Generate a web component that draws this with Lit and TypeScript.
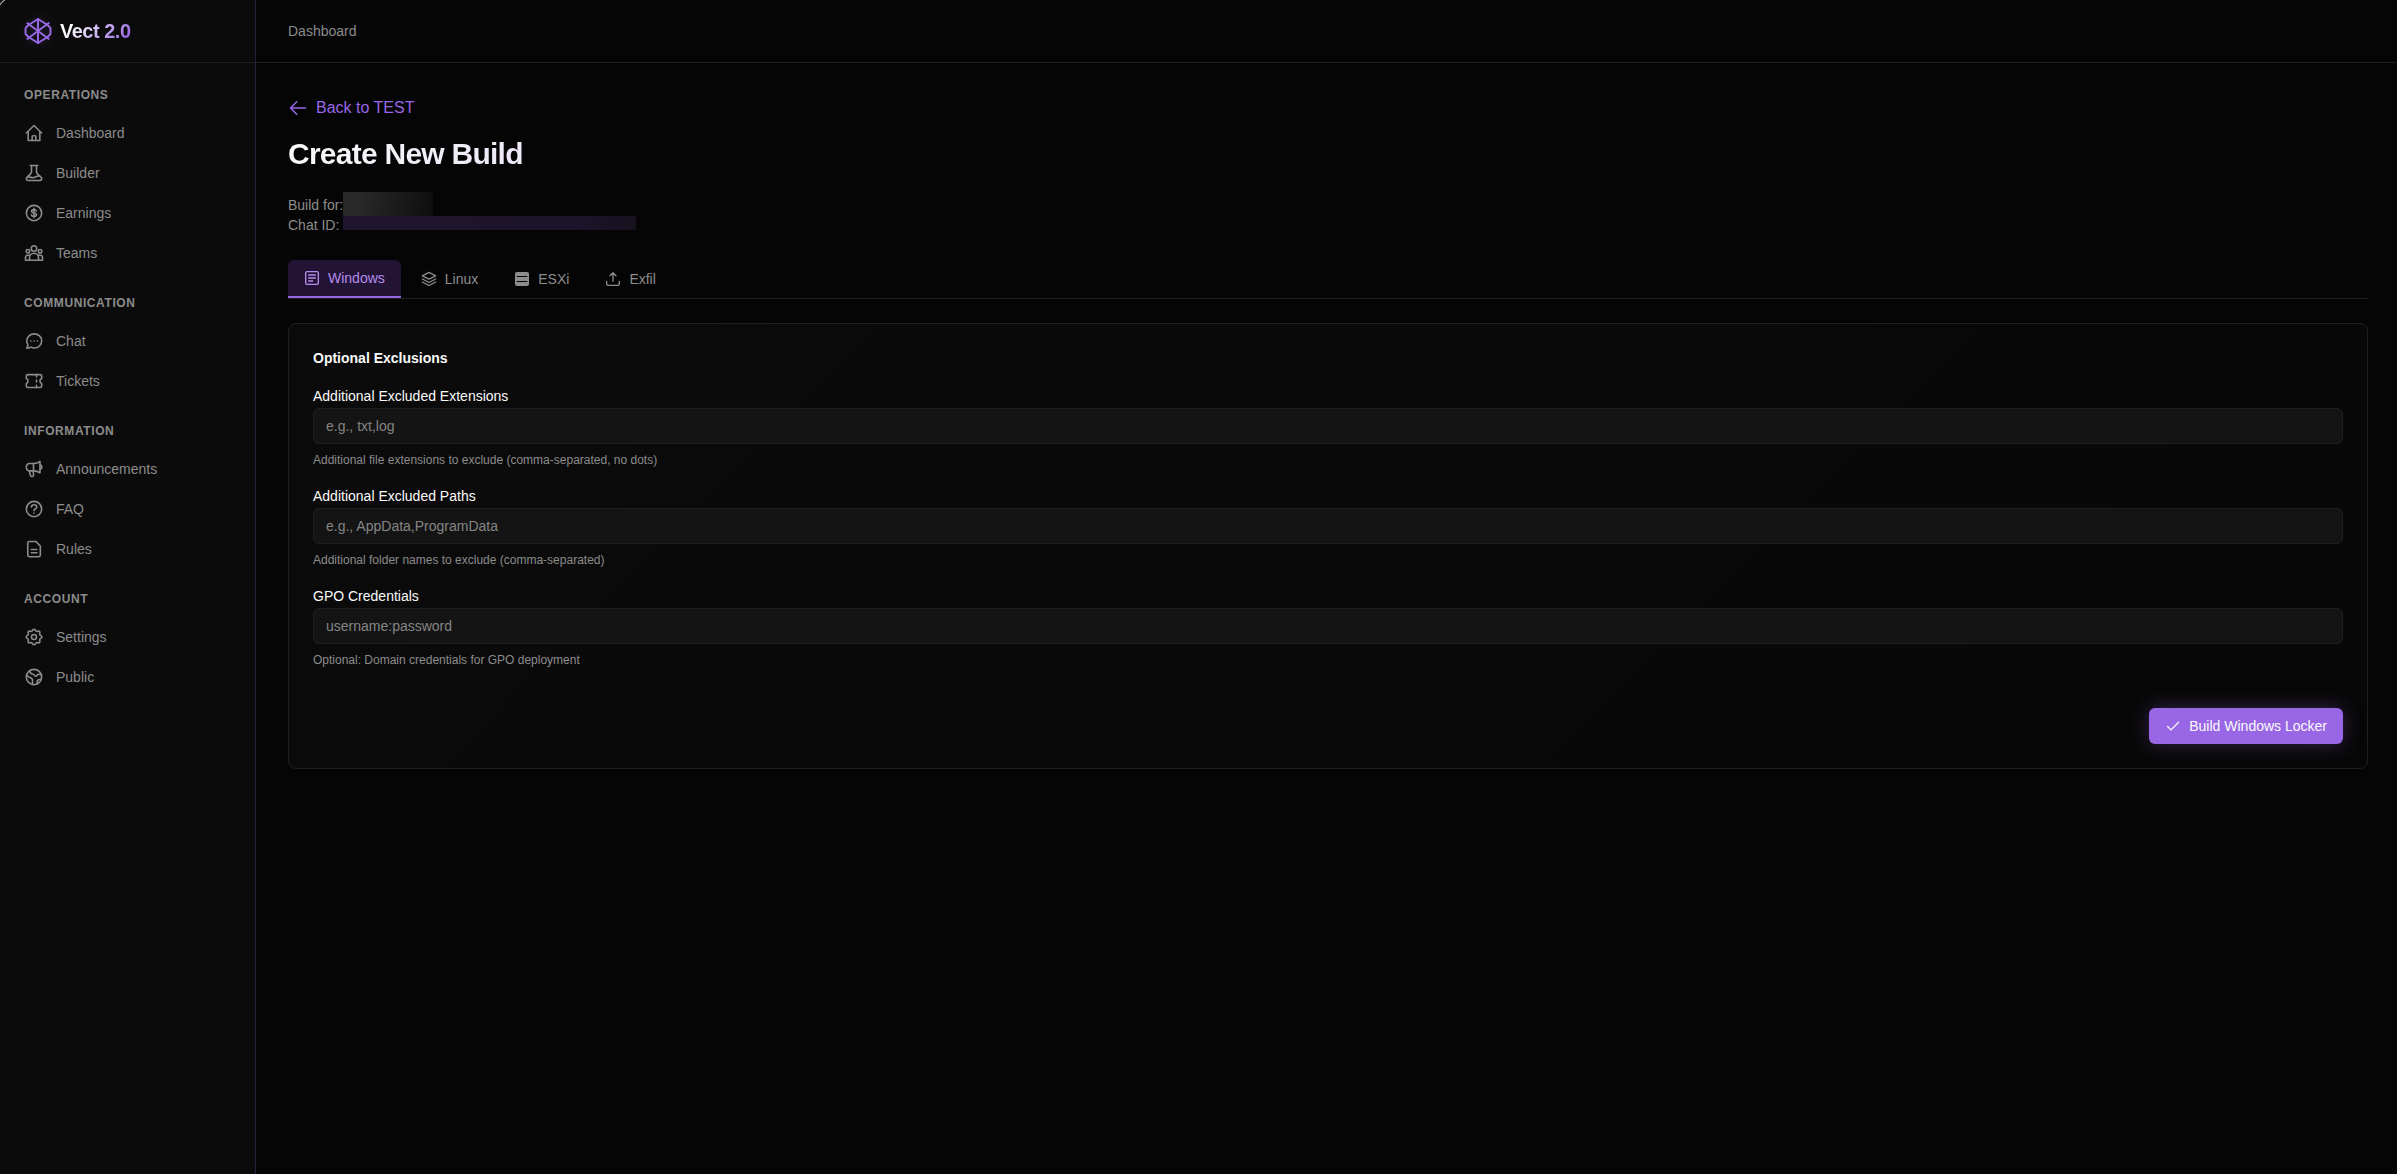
import { LitElement, html, css, svg } from "lit";
import { customElement, property, state } from "lit/decorators.js";

/** Outline of the settings cog: a circle with eight soft teeth. */
const cogOutline = (() => {
  const points = Array.from({ length: 64 }, (_, i) => {
    const angle = (i / 64) * Math.PI * 2;
    const wave = Math.cos(angle * 8);
    const radius = 8.4 + Math.sign(wave) * Math.sqrt(Math.abs(wave)) * 0.9;
    return `${(12 + radius * Math.cos(angle)).toFixed(2)} ${(12 + radius * Math.sin(angle)).toFixed(2)}`;
  });
  return `M${points.join("L")}z`;
})();

const icons: Record<string, unknown> = {
  home: svg`<path d="M2.800 12 12 3l9.200 9"/><path d="M5 10.400V21h14V10.400"/><path d="M9.800 21v-4.800c0-.6.400-1 1-1h2.400c.6 0 1 .4 1 1V21"/>`,
  builder: svg`<path d="M7.500 3h9"/><path d="M9 3v7.500C9 13 7.500 14 4.500 16c-2.600 1.800-2 5 .3 5h14.400c2.300 0 2.900-3.200.3-5-3-2-4.500-3-4.500-5.500V3"/><path d="M5 17c3-.3 4.500 1 7 .4 2.500-.7 3.500-2 6.500-1.700"/>`,
  earnings: svg`<circle cx="12" cy="12" r="9.200"/><path d="M14.800 9.600c-.4-1.200-1.500-1.700-2.800-1.700-1.600 0-2.900.7-2.900 2s1.200 1.800 2.900 2.100c1.800.3 3 .8 3 2.200s-1.400 2-3 2-2.700-.6-3.100-1.900M12 6.300v11.400"/>`,
  teams: svg`<circle cx="12" cy="6.500" r="3.300"/><circle cx="4.700" cy="9.800" r="2.100"/><circle cx="19.300" cy="9.800" r="2.100"/><path d="M6.600 20.600v-3a5.400 5.400 0 0 1 10.800 0v3z"/><path d="M6.600 20.600H1.800v-3.200c0-1.500 1.300-2.600 2.900-2.600h2M17.400 20.600h4.800v-3.200c0-1.500-1.300-2.600-2.900-2.600h-2"/>`,
  chat: svg`<path d="M12.300 3.400c5 0 8.900 3.700 8.900 8.500s-3.900 8.500-8.900 8.500c-1.600 0-3-.3-4.200-1-1.500 1-3.200 1.300-4.900 1.100.9-1 1.400-2.400 1.500-3.800a8 8 0 0 1-1.300-4.800c0-4.800 3.900-8.500 8.900-8.500z"/><path d="M8.200 12h.1M12.100 12h.1M16 12h.1"/>`,
  tickets: svg`<path d="M4.500 4.300h15a1.700 1.700 0 0 1 1.700 1.700v3a3.200 3.200 0 0 0 0 6v3a1.700 1.700 0 0 1-1.700 1.700h-15a1.700 1.700 0 0 1-1.700-1.700v-3a3.200 3.200 0 0 0 0-6V6a1.700 1.700 0 0 1 1.700-1.700z"/><path d="M15 5v2M15 10.900v2.200M15 17v2"/>`,
  announcements: svg`<path d="M6.400 5.400h5c3 0 5.600-.7 7.800-2.400v13.600c-2.200-1.700-4.800-2.400-7.800-2.400h-5c-2.200 0-3.600-1.800-3.600-4.400s1.400-4.400 3.600-4.400z"/><path d="M11.400 5.400v8.800M19.200 7c1.500.4 2.200 1.400 2.200 2.800s-.7 2.400-2.200 2.800M6.200 14.200l1.600 5.600c.6 1.900 4 1.500 3.700-.7l-.6-4.900"/>`,
  faq: svg`<circle cx="12" cy="12" r="9.200"/><path d="M8.800 9.600c.3-1.700 1.500-2.700 3.300-2.700 1.900 0 3.200 1.100 3.200 2.700 0 2.400-3.300 2.400-3.300 4.400M12 17v.1"/>`,
  rules: svg`<path d="M6.400 2.900h7.800l5.400 5.500v10.900c0 1.100-.8 1.900-1.900 1.900H6.400c-1.100 0-1.900-.8-1.900-1.900V4.800c0-1.100.8-1.900 1.900-1.900z"/><path d="M8.800 12.500h6.600M8.800 16.500h6.600"/>`,
  settings: svg`<path d=${cogOutline}/><circle cx="12" cy="12" r="3"/>`,
  public: svg`<circle cx="12" cy="12" r="9.200"/><path d="M7 4.500c0 2.500 1.200 3.700 3.500 4 1.900.2 1.500 2.500 3.400 2.500s1.600-2 3.300-2.200c1.600-.1 2.800.2 3.800.6M3 10.500c2 .2 2.800 1.500 4.400 2.200 1.900.8 3.200 1.500 2.800 3.800-.3 1.700-.2 3.200.6 4.600M16 20.200c-.6-2.200-.2-4.300 1.500-5 1.200-.5 2.300-.5 3.200-.4"/>`,
  back: svg`<path d="M3 12h18M10.500 4.500 3 12l7.500 7.500"/>`,
  windows: svg`<rect x="2.500" y="2.500" width="19" height="19" rx="2"/><path d="M7 7.500h10M7 12h10M7 16.500h6"/>`,
  linux: svg`<path d="M12 2 22 7.300l-10 5-10-5zM2 12l10 5.200L22 12M2 16.500l10 5.200 10-5.200"/>`,
  esxi: svg`<rect x="1.500" y="1.500" width="21" height="21" rx="3" fill="currentColor" stroke="none"/><path d="M4 8.200h16M4 15.800h16" stroke="#050505" stroke-width="1.600" stroke-linecap="butt"/>`,
  exfil: svg`<path d="M12 15.500V2.500M7.500 7 12 2.500 16.500 7M2.500 15.500v4c0 1.200.8 2 2 2h15c1.200 0 2-.8 2-2v-4"/>`,
  check: svg`<path d="m4 12.800 5 5L20.500 6.500"/>`,
};

const icon = (name: string) => html`<svg class="icon" viewBox="0 0 24 24" aria-hidden="true">${icons[name]}</svg>`;

const sections = [
  { title: "Operations", items: [["home", "Dashboard"], ["builder", "Builder"], ["earnings", "Earnings"], ["teams", "Teams"]] },
  { title: "Communication", items: [["chat", "Chat"], ["tickets", "Tickets"]] },
  { title: "Information", items: [["announcements", "Announcements"], ["faq", "FAQ"], ["rules", "Rules"]] },
  { title: "Account", items: [["settings", "Settings"], ["public", "Public"]] },
];

const tabs = [
  ["windows", "Windows"],
  ["linux", "Linux"],
  ["esxi", "ESXi"],
  ["exfil", "Exfil"],
];

const fields = [
  { id: "extensions", label: "Additional Excluded Extensions", placeholder: "e.g., txt,log", hint: "Additional file extensions to exclude (comma-separated, no dots)" },
  { id: "paths", label: "Additional Excluded Paths", placeholder: "e.g., AppData,ProgramData", hint: "Additional folder names to exclude (comma-separated)" },
  { id: "gpo", label: "GPO Credentials", placeholder: "username:password", hint: "Optional: Domain credentials for GPO deployment" },
];

const iconStyles = css`
  * {
    box-sizing: border-box;
  }
  .icon {
    width: 20px;
    height: 20px;
    flex: none;
    fill: none;
    stroke: currentColor;
    stroke-width: 1.9;
    stroke-linecap: round;
    stroke-linejoin: round;
  }
`;

@customElement("app-sidebar")
export class AppSidebar extends LitElement {
  static styles = [
    iconStyles,
    css`
      :host {
        display: block;
        background: #0b0b0b;
        border-right: 1px solid #262040;
        color: #8c8c8c;
      }
      .brand {
        display: flex;
        align-items: center;
        gap: 8px;
        height: 63px;
        padding: 0 24px;
        border-bottom: 1px solid #1f1f1f;
        text-decoration: none;
      }
      .logo {
        width: 28px;
        height: 28px;
        flex: none;
        fill: none;
        stroke: #9767e4;
        stroke-width: 2;
        stroke-linecap: round;
        stroke-linejoin: round;
        border-radius: 50%;
        background: #131218;
        box-shadow: 0 0 16px 2px #131218;
      }
      .name {
        font-size: 20px;
        line-height: 28px;
        font-weight: 700;
        letter-spacing: -0.025em;
        color: transparent;
        background: linear-gradient(135deg, #ffffff 20%, #9966e6 90%);
        background-clip: text;
        -webkit-background-clip: text;
      }
      .nav {
        display: flex;
        flex-direction: column;
        gap: 24px;
        padding: 24px 12px;
      }
      .title {
        margin: 0 0 12px;
        padding: 0 12px;
        font-size: 12px;
        line-height: 16px;
        font-weight: 700;
        letter-spacing: 0.05em;
        text-transform: uppercase;
      }
      .list {
        display: flex;
        flex-direction: column;
        gap: 4px;
        margin: 0;
        padding: 0;
        list-style: none;
      }
      .link {
        display: flex;
        align-items: center;
        gap: 12px;
        height: 36px;
        padding: 0 12px;
        color: inherit;
        font-size: 14px;
        line-height: 20px;
        text-decoration: none;
      }
    `,
  ];

  render() {
    return html`
      <a class="brand" href="#home">
        <svg class="logo" viewBox="0 0 28 28" aria-hidden="true">
          <path d="M14 2 23.500 8 26.500 11v6l-3 3L14 26 4.500 20l-3-3v-6l3-3z" />
          <path d="M14 2v24M2.500 5.500l23 17M25.500 5.500l-23 17" />
        </svg>
        <span class="name">Vect 2.0</span>
      </a>
      <nav class="nav">
        ${sections.map(
          (s) => html`<section>
            <h2 class="title">${s.title}</h2>
            <ul class="list">
              ${s.items.map(([glyph, label]) => html`<li><a class="link" href="#${label.toLowerCase()}">${icon(glyph)}<span>${label}</span></a></li>`)}
            </ul>
          </section>`,
        )}
      </nav>
    `;
  }
}

@customElement("build-form")
export class BuildForm extends LitElement {
  @property() platform = "Windows";

  static styles = [
    iconStyles,
    css`
      :host {
        display: block;
      }
      .card {
        display: flex;
        flex-direction: column;
        gap: 16px;
        padding: 24px;
        border: 1px solid #1f1f1f;
        border-radius: 8px;
        background: linear-gradient(135deg, #0b0b0b, #070707);
      }
      .heading {
        margin: 0;
        color: #fafafa;
        font-size: 14px;
        line-height: 20px;
        font-weight: 700;
      }
      .field {
        display: flex;
        flex-direction: column;
      }
      .label {
        color: #fafafa;
        font-size: 14px;
        line-height: 24px;
      }
      .input {
        width: 100%;
        height: 36px;
        padding: 0 12px;
        border: 1px solid #1f1f1f;
        border-radius: 6px;
        background: #141414;
        color: #fafafa;
        font-family: inherit;
        font-size: 14px;
      }
      .input::placeholder {
        color: #858585;
        opacity: 1;
      }
      .hint {
        margin: 8px 0 0;
        color: #8c8c8c;
        font-size: 12px;
        line-height: 16px;
      }
      .actions {
        display: flex;
        justify-content: flex-end;
        padding-top: 24px;
      }
      .submit {
        display: flex;
        align-items: center;
        gap: 8px;
        height: 36px;
        padding: 0 16px;
        border: 0;
        border-radius: 6px;
        background: #9967e6;
        box-shadow: 0 0 20px rgba(153, 102, 230, 0.3);
        color: #fafafa;
        font-family: inherit;
        font-size: 14px;
        line-height: 20px;
        cursor: pointer;
      }
      .submit .icon {
        width: 16px;
        height: 16px;
        stroke-width: 2;
      }
    `,
  ];

  render() {
    return html`
      <form class="card" @submit=${(e: Event) => e.preventDefault()}>
        <h2 class="heading">Optional Exclusions</h2>
        ${fields.map(
          (f) => html`<div class="field">
            <label class="label" for=${f.id}>${f.label}</label>
            <input class="input" id=${f.id} type="text" placeholder=${f.placeholder} aria-describedby="${f.id}-hint" />
            <p class="hint" id="${f.id}-hint">${f.hint}</p>
          </div>`,
        )}
        <div class="actions">
          <button class="submit" type="submit">${icon("check")}<span>Build ${this.platform} Locker</span></button>
        </div>
      </form>
    `;
  }
}

@customElement("app-root")
export class AppRoot extends LitElement {
  @state() private active = "Windows";

  static styles = [
    iconStyles,
    css`
      :host {
        position: relative;
        display: grid;
        grid-template-columns: 256px minmax(0, 1fr);
        min-height: 100vh;
        background: #050505;
        font-family: "Liberation Sans", Arial, sans-serif;
        color: #8c8c8c;
      }
      /* Rounded window edge over the top left corner */
      :host::before {
        content: "";
        position: absolute;
        top: 0;
        left: 0;
        width: 5px;
        height: 5px;
        background: radial-gradient(circle at 7px 7px, transparent 6px, #b0b0b0 7px, #101010 8px);
      }
      .topbar {
        display: flex;
        align-items: center;
        height: 63px;
        padding: 0 32px;
        border-bottom: 1px solid #1f1f1f;
        font-size: 14px;
        line-height: 20px;
      }
      .content {
        padding: 33px 29px 32px 32px;
      }
      .back {
        display: flex;
        align-items: center;
        gap: 8px;
        width: fit-content;
        color: #9966e6;
        font-size: 16px;
        line-height: 24px;
        text-decoration: none;
      }
      .title {
        margin: 16px 0 20px;
        color: transparent;
        background: linear-gradient(135deg, #fafafa, #9966e6);
        background-clip: text;
        -webkit-background-clip: text;
        font-size: 30px;
        line-height: 36px;
        font-weight: 700;
        letter-spacing: -0.025em;
      }
      .meta {
        display: flex;
        margin-bottom: 25px;
        font-size: 14px;
        line-height: 20px;
      }
      .labels {
        padding-top: 3px;
      }
      .line {
        margin: 0;
      }
      .owner {
        width: 90px;
        height: 24px;
        background: linear-gradient(100deg, #282828 20%, #0e0e0e);
      }
      .chat-id {
        width: 293px;
        height: 14px;
        background: linear-gradient(90deg, #20152f, #1c142a 80%, #17111f);
      }
      .tabs {
        display: flex;
        gap: 4px;
        margin-bottom: 24px;
        border-bottom: 1px solid #1f1f1f;
      }
      .tab {
        display: flex;
        align-items: center;
        gap: 8px;
        height: 38px;
        padding: 0 16px;
        border: 0;
        border-radius: 6px 6px 0 0;
        background: none;
        color: #8c8c8c;
        font-family: inherit;
        font-size: 14px;
        line-height: 20px;
        cursor: pointer;
      }
      .tab .icon {
        width: 16px;
        height: 16px;
        stroke-width: 2;
      }
      .tab[aria-selected="true"] {
        background: linear-gradient(#9966e6, #9966e6) bottom / 100% 2px no-repeat #231436;
        padding-bottom: 2px;
        color: #b48ced;
      }
    `,
  ];

  render() {
    return html`
      <app-sidebar></app-sidebar>
      <div>
        <header class="topbar">Dashboard</header>
        <main class="content">
          <a class="back" href="#test">${icon("back")}<span>Back to TEST</span></a>
          <h1 class="title">Create New Build</h1>
          <div class="meta">
            <div class="labels">
              <p class="line">Build for:</p>
              <p class="line">Chat ID:</p>
            </div>
            <div>
              <div class="owner"></div>
              <div class="chat-id"></div>
            </div>
          </div>
          <div class="tabs" role="tablist">
            ${tabs.map(
              ([glyph, label]) => html`<button
                class="tab"
                role="tab"
                type="button"
                aria-selected=${this.active === label ? "true" : "false"}
                @click=${() => (this.active = label)}
              >${icon(glyph)}<span>${label}</span></button>`,
            )}
          </div>
          <build-form .platform=${this.active}></build-form>
        </main>
      </div>
    `;
  }
}
